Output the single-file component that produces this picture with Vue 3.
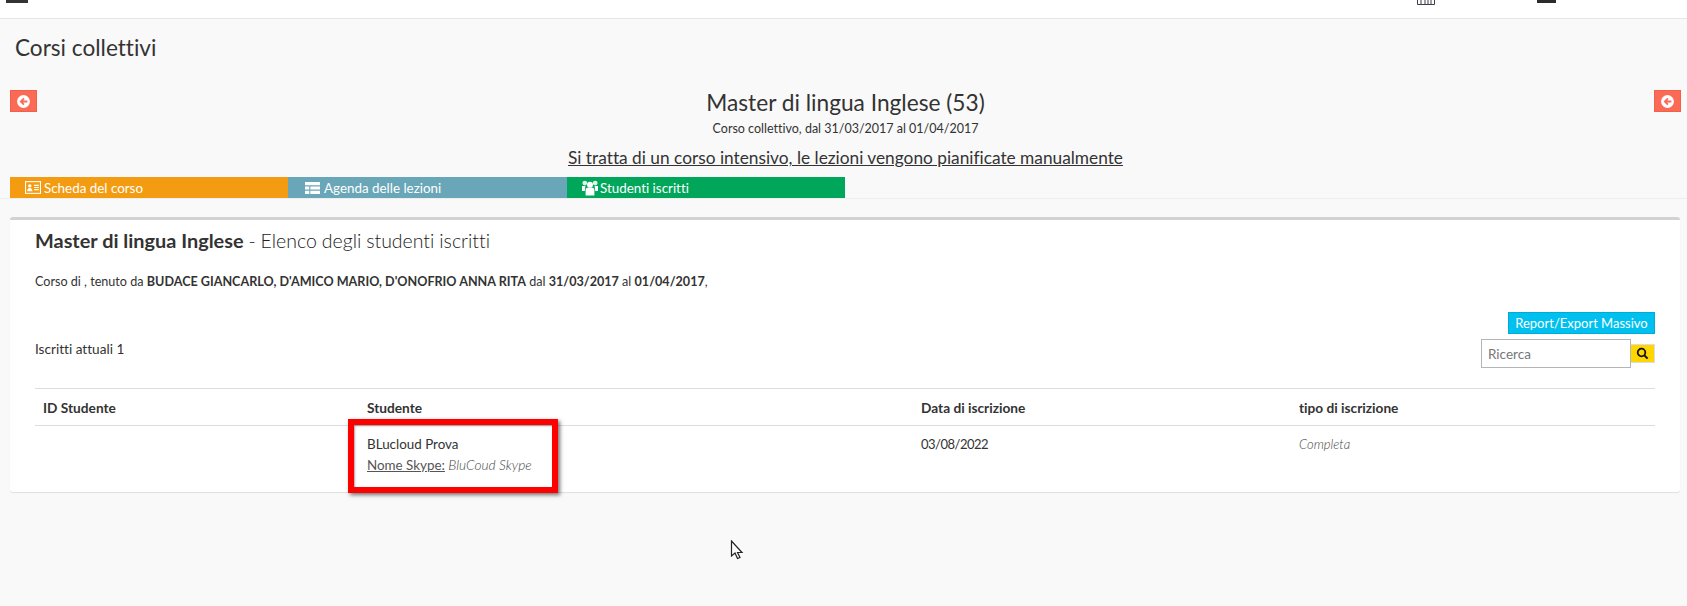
<script setup>
const tabs = [
  { label: 'Scheda del corso', cls: 'orange', icon: 'card' },
  { label: 'Agenda delle lezioni', cls: 'teal', icon: 'table' },
  { label: 'Studenti iscritti', cls: 'green', icon: 'users' },
]
</script>

<template>
  <div class="page">
    <header class="topbar">
      <div class="burger"></div>
      <div class="spacer"></div>
      <svg class="cal" width="18" height="5" viewBox="0 0 18 5"><path d="M0.5 0v4.5h17V0M4 0v4M8 0v4M11 0v4M14 0v4" fill="none" stroke="#3a3f4a" stroke-width="1"/></svg>
      <div class="user"></div>
    </header>

    <h1 class="page-title">Corsi collettivi</h1>

    <section class="hero">
      <button class="back"><svg width="15" height="15" viewBox="0 0 14 14"><circle cx="7" cy="7" r="6" fill="#fff"/><path d="M10.6 7H4.6M7.4 4.1L4.5 7l2.9 2.9" fill="none" stroke="#fb6a54" stroke-width="1.7"/></svg></button>
      <div class="hero-text">
        <h2>Master di lingua Inglese (53)</h2>
        <p class="sub">Corso collettivo, dal 31/03/2017 al 01/04/2017</p>
        <p class="note">Si tratta di un corso intensivo, le lezioni vengono pianificate manualmente</p>
      </div>
      <button class="back"><svg width="15" height="15" viewBox="0 0 14 14"><circle cx="7" cy="7" r="6" fill="#fff"/><path d="M10.6 7H4.6M7.4 4.1L4.5 7l2.9 2.9" fill="none" stroke="#fb6a54" stroke-width="1.7"/></svg></button>
    </section>

    <nav class="tabs">
      <div v-for="t in tabs" :key="t.label" class="tab" :class="t.cls">
        <svg v-if="t.icon === 'card'" width="16" height="13" viewBox="0 0 15 12"><rect x="0.5" y="0.5" width="14" height="11" fill="none" stroke="#fff"/><circle cx="4.5" cy="4.5" r="1.6" fill="#fff"/><path d="M2 9.5c0-4 5-4 5 0zM8.5 3.5h4.5v1H8.5zM8.5 5.5h4.5v1H8.5zM8.5 7.5h4.5v1H8.5z" fill="#fff"/></svg>
        <svg v-else-if="t.icon === 'table'" width="15" height="12" viewBox="0 0 14 11"><path d="M0 0h14v3H0zM0 4h4v3H0zM5 4h9v3H5zM0 8h4v3H0zM5 8h9v3H5z" fill="#fff"/></svg>
        <svg v-else width="16" height="16" viewBox="0 0 16 15"><circle cx="8" cy="4.2" r="3" fill="#fff"/><circle cx="2.8" cy="2.6" r="2.4" fill="#dff5e8"/><circle cx="13.2" cy="2.6" r="2.4" fill="#dff5e8"/><path d="M3.6 15V9.6c0-2 1.6-2.6 4.4-2.6s4.4.6 4.4 2.6V15zM0 5.6h3.4L2.8 10.4H0zM16 5.6h-3.4l.6 4.8H16z" fill="#fff"/></svg>
        <span>{{ t.label }}</span>
      </div>
    </nav>

    <main class="card">
      <h3 class="card-title"><strong>Master di lingua Inglese</strong> - Elenco degli studenti iscritti</h3>
      <p class="desc">Corso di , tenuto da <b>BUDACE GIANCARLO, D'AMICO MARIO, D'ONOFRIO ANNA RITA</b> dal <b>31/03/2017</b> al <b>01/04/2017</b>,</p>

      <div class="tools">
        <span class="count">Iscritti attuali 1</span>
        <div class="tools-right">
          <button class="report">Report/Export Massivo</button>
          <div class="search">
            <input placeholder="Ricerca" />
            <button class="go"><svg width="13" height="13" viewBox="0 0 13 13"><circle cx="5.5" cy="5.5" r="3.8" fill="none" stroke="#111" stroke-width="1.8"/><path d="M8.4 8.4l3.2 3.2" stroke="#111" stroke-width="2"/></svg></button>
          </div>
        </div>
      </div>

      <table>
        <thead>
          <tr><th class="c1">ID Studente</th><th class="c2">Studente</th><th class="c3">Data di iscrizione</th><th>tipo di iscrizione</th></tr>
        </thead>
        <tbody>
          <tr>
            <td></td>
            <td><div>BLucloud Prova</div><div class="skype"><u>Nome Skype:</u> <i>BluCoud Skype</i></div></td>
            <td class="date">03/08/2022</td>
            <td><i class="muted">Completa</i></td>
          </tr>
        </tbody>
      </table>
    </main>

    <div class="highlight"></div>
    <svg class="cursor" width="14" height="20" viewBox="0 0 14 20"><path d="M1.5 1v15l3.5-3 2.5 5.5 2.5-1-2.5-5H12z" fill="#fff" stroke="#222" stroke-width="1.2"/></svg>
  </div>
</template>

<style>
html, body { margin: 0; background: #f9f9f9; }
</style>

<style scoped>
.page {
  position: relative;
  height: 606px;
  overflow: hidden;
  background: #f9f9f9;
  color: #333;
  font-family: Lato, "Noto Sans", sans-serif;
  font-size: 12.6px;
  font-variant-ligatures: none;
}
.topbar {
  height: 18px;
  background: #fff;
  border-bottom: 1px solid #e7e7e7;
  display: flex;
  align-items: flex-start;
  padding-left: 6px;
}
.burger { width: 22px; height: 3px; background: #333; }
.spacer { flex: 1; }
.cal { display: block; }
.user { width: 19px; height: 3px; background: #2b2b2b; margin-left: 102px; margin-right: 131px; }
.page-title {
  margin: 0;
  padding: 16px 0 0 15px;
  height: 34px;
  font-size: 22.6px;
  line-height: 26px;
  font-weight: 400;
  color: #333;
}
.hero {
  display: flex;
  align-items: flex-start;
  padding: 21px 6px 0 10px;
  height: 87px;
  box-sizing: content-box;
}
.back {
  width: 27px;
  height: 22px;
  padding: 0;
  border: 1px solid #f0604b;
  background: #fb6a54;
  display: flex;
  align-items: center;
  justify-content: center;
  flex: none;
}
.hero-text { flex: 1; text-align: center; }
.hero-text h2 {
  margin: 0 0 4px;
  font-size: 22.7px;
  line-height: 26px;
  font-weight: 400;
}
.sub { margin: 0; font-size: 12.5px; line-height: 17px; }
.note {
  margin: 9px 0 0;
  font-size: 17.3px;
  line-height: 24px;
  text-decoration: underline;
}
.tabs {
  display: flex;
  padding-left: 10px;
  height: 21px;
  border-bottom: 1px solid #eeeeee;
}
.tab {
  width: 278px;
  box-sizing: border-box;
  padding-left: 15px;
  height: 21px;
  display: flex;
  align-items: center;
  gap: 3px;
  color: #fff;
  font-size: 13.4px;
  flex: none;
}
.tab.teal { width: 279px; padding-left: 17px; gap: 4px; }
.tab.green { padding-left: 15px; gap: 2px; }
.orange { background: #f39c12; }
.teal { background: #69a6b7; }
.green { background: #00a65a; }
.card {
  margin: 18px 7px 0 10px;
  height: 272px;
  box-sizing: content-box;
  background: #fff;
  border-top: 3px solid #d2d2d2;
  border-radius: 3px;
  box-shadow: 0 1px 1px rgba(0, 0, 0, 0.1);
  padding: 0 25px;
}
.card-title {
  margin: 0;
  padding-top: 7px;
  font-size: 19.5px;
  line-height: 26px;
  font-weight: 300;
  color: #222;
  word-spacing: -0.4px;
}
.card-title strong { font-size: 19.9px; font-weight: 700; color: #333; word-spacing: 0; }
.desc { margin: 19px 0 0; font-size: 12.6px; line-height: 18px; }
.tools {
  display: flex;
  justify-content: space-between;
  margin-top: 21px;
  height: 76px;
}
.count { margin-top: 28px; line-height: 18px; font-size: 13.6px; }
.tools-right { display: flex; flex-direction: column; align-items: flex-end; gap: 5px; }
.report {
  width: 147px;
  height: 22px;
  padding: 0;
  border: 1px solid #00acd6;
  background: #00c0ef;
  color: #fff;
  font-family: inherit;
  font-size: 13px;
}
.search { display: flex; align-items: center; }
.search input {
  width: 150px;
  height: 29px;
  box-sizing: border-box;
  border: 1px solid #b5b5b5;
  padding: 0 6px;
  font-family: inherit;
  font-size: 13.5px;
  background: #fff;
  outline: none;
}
.search input::placeholder { color: #777; opacity: 1; }
.go {
  width: 24px;
  height: 19px;
  padding: 0;
  border: 1px solid #ddd;
  border-left: 0;
  background: #ffd600;
  display: flex;
  align-items: center;
  justify-content: center;
}
table {
  width: 100%;
  border-collapse: collapse;
  table-layout: fixed;
  border-top: 1px solid #ddd;
}
th {
  text-align: left;
  height: 37px;
  padding: 0 8px;
  box-sizing: border-box;
  font-size: 13.7px;
  font-weight: 700;
  border-bottom: 1px solid #ddd;
}
.c1 { width: 324px; }
.c2 { width: 554px; }
.c3 { width: 378px; }
td {
  vertical-align: top;
  padding: 8px 8px 0;
  line-height: 21px;
  font-size: 13.4px;
}
td.date { font-size: 13px; letter-spacing: -0.5px; }
.skype { margin-top: -1px; color: #555; }
.skype i { color: #444; font-size: 13.7px; font-weight: 300; }
.muted { color: #444; font-size: 13px; font-weight: 300; }
.highlight {
  position: absolute;
  left: 348px;
  top: 419px;
  width: 210px;
  height: 74px;
  box-sizing: border-box;
  border: 6px solid #ff0000;
  box-shadow: 2px 2px 4px rgba(0, 0, 0, 0.55), inset 1px 1px 2px rgba(0, 0, 0, 0.35);
}
.cursor { position: absolute; left: 730px; top: 540px; }
</style>
